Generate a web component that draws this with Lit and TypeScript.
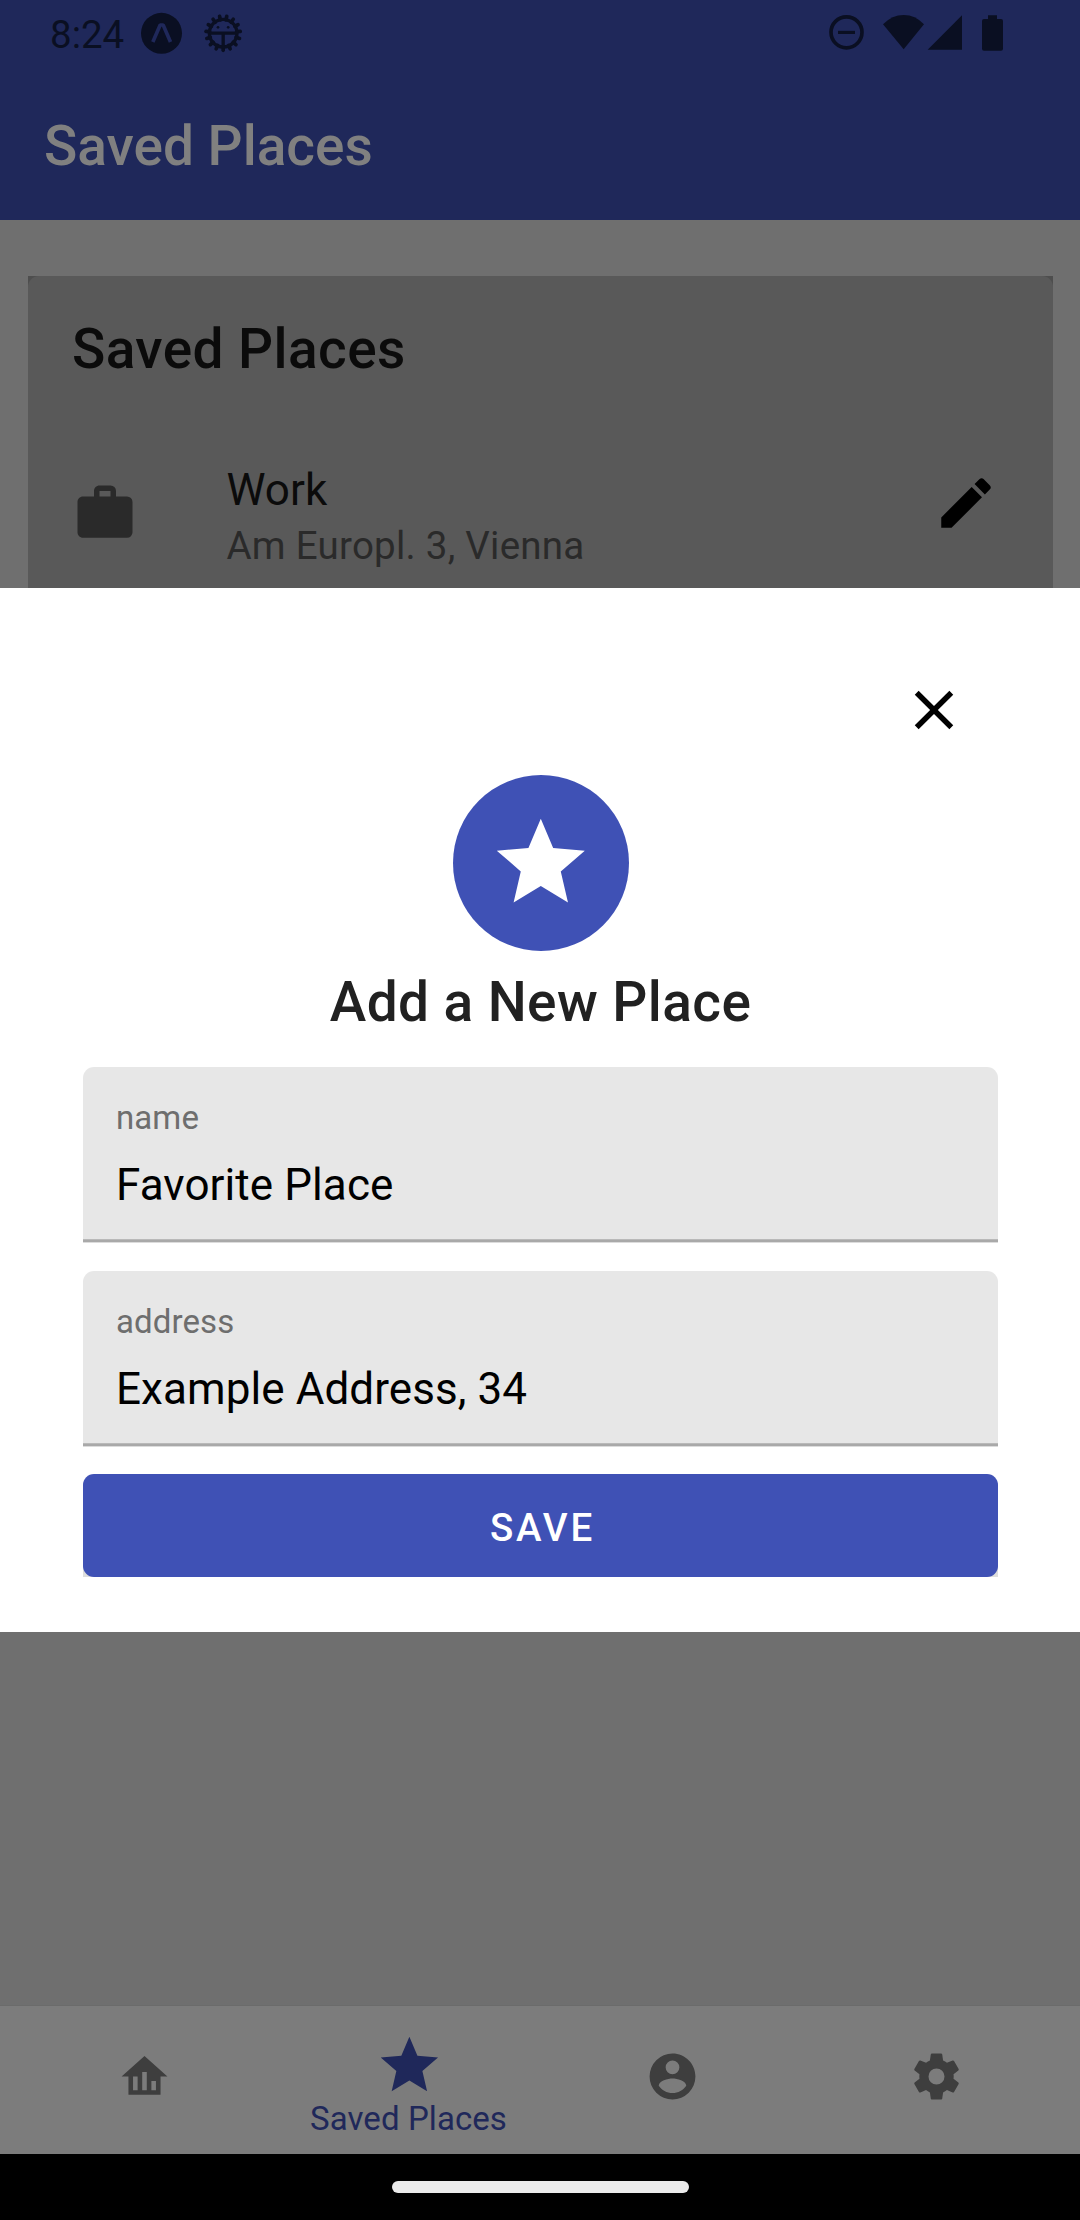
import { LitElement, html, css, svg } from "lit";
import { customElement } from "lit/decorators.js";

const ICONS = {
  briefcase:
    "M10,2H14A2,2 0 0,1 16,4V6H20A2,2 0 0,1 22,8V19A2,2 0 0,1 20,21H4C2.89,21 2,20.1 2,19V8C2,6.89 2.89,6 4,6H8V4C8,2.89 8.89,2 10,2M14,6V4H10V6H14Z",
  pencil:
    "M20.71,7.04C21.1,6.65 21.1,6 20.71,5.63L18.37,3.29C18,2.9 17.35,2.9 16.96,3.29L15.12,5.12L18.87,8.87M3,17.25V21H6.75L17.81,9.93L14.06,6.18L3,17.25Z",
  close:
    "M19,6.41L17.59,5L12,10.59L6.41,5L5,6.41L10.59,12L5,17.59L6.41,19L12,13.41L17.59,19L19,17.59L13.41,12L19,6.41Z",
  star: "M12,17.27L18.18,21L16.54,13.97L22,9.24L14.81,8.62L12,2L9.19,8.62L2,9.24L7.45,13.97L5.82,21L12,17.27Z",
  home: "M12,3L2,12H5V20H19V12H22L12,3M9,18H7V12H9V18M13,18H11V10H13V18M17,18H15V14H17V18Z",
  account:
    "M12,19.2C9.5,19.2 7.29,17.92 6,16C6.03,14 10,12.9 12,12.9C14,12.9 17.97,14 18,16C16.71,17.92 14.5,19.2 12,19.2M12,5A3,3 0 0,1 15,8A3,3 0 0,1 12,11A3,3 0 0,1 9,8A3,3 0 0,1 12,5M12,2A10,10 0 0,0 2,12A10,10 0 0,0 12,22A10,10 0 0,0 22,12C22,6.47 17.5,2 12,2Z",
  cog: "M12,15.5A3.5,3.5 0 0,1 8.5,12A3.5,3.5 0 0,1 12,8.5A3.5,3.5 0 0,1 15.5,12A3.5,3.5 0 0,1 12,15.5M19.43,12.97C19.47,12.65 19.5,12.33 19.5,12C19.5,11.67 19.47,11.34 19.43,11L21.54,9.37C21.73,9.22 21.78,8.95 21.66,8.73L19.66,5.27C19.54,5.05 19.27,4.96 19.05,5.05L16.56,6.05C16.04,5.66 15.5,5.32 14.87,5.07L14.5,2.42C14.46,2.18 14.25,2 14,2H10C9.75,2 9.54,2.18 9.5,2.42L9.13,5.07C8.5,5.32 7.96,5.66 7.44,6.05L4.95,5.05C4.73,4.96 4.46,5.05 4.34,5.27L2.34,8.73C2.21,8.95 2.27,9.22 2.46,9.37L4.57,11C4.53,11.34 4.5,11.67 4.5,12C4.5,12.33 4.53,12.65 4.57,12.97L2.46,14.63C2.27,14.78 2.21,15.05 2.34,15.27L4.34,18.73C4.46,18.95 4.73,19.03 4.95,18.95L7.44,17.94C7.96,18.34 8.5,18.68 9.13,18.93L9.5,21.58C9.54,21.82 9.75,22 10,22H14C14.25,22 14.46,21.82 14.5,21.58L14.87,18.93C15.5,18.67 16.04,18.34 16.56,17.94L19.05,18.95C19.27,19.03 19.54,18.95 19.66,18.73L21.66,15.27C21.78,15.05 21.73,14.78 21.54,14.63L19.43,12.97Z",
};

const icon = (name: keyof typeof ICONS, cls: string) =>
  html`<svg class="icon ${cls}" viewBox="0 0 24 24"><path d=${ICONS[name]} /></svg>`;

@customElement("status-bar")
class StatusBar extends LitElement {
  static styles = css`
    :host {
      display: flex;
      align-items: flex-start;
      height: 66px;
      padding: 0 72px 0 50px;
      box-sizing: border-box;
      color: #0a0f22;
      fill: #0a0f22;
    }
    .time {
      font-size: 38.5px;
      line-height: 70px;
      width: 91px;
    }
    svg { display: block; flex: none; }
    .expo { margin: 12px 20px 0 0; }
    .caret { fill: none; stroke: #1f285a; stroke-width: 11; stroke-linejoin: bevel; }
    .bug { margin-top: 13px; }
    .line { fill: none; stroke: #0a0f22; }
    .fill { flex: 1; }
    .system { margin-top: 12px; }
  `;

  render() {
    const teeth = Array.from({ length: 15 }, (_, i) => i * 24);
    return html`
      <span class="time">8:24</span>
      <svg class="expo" width="42" height="43" viewBox="423 36 126 129">
        <circle cx="484.5" cy="100" r="61.5" />
        <path class="caret" d="M458.500 126L480.500 75H489.500L511.500 126" />
      </svg>
      <svg class="bug" width="40" height="40" viewBox="607 39 120 120">
        ${teeth.map(
          (a) => svg`<line class="line" x1="667.500" y1="140" x2="667.500" y2="151"
            stroke-width="11" stroke-linecap="round" transform="rotate(${a} 667.500 99.500)" />`,
        )}
        <circle class="line" cx="667.5" cy="99.5" r="41.500" stroke-width="10" />
        <path class="line" stroke-width="10" d="M626 99.500H709M667.500 99V141" />
        <circle cx="652" cy="82" r="4" />
        <circle cx="682.5" cy="82" r="4" />
      </svg>
      <span class="fill"></span>
      <svg class="system" width="180" height="42" viewBox="144 36 540 126">
        <circle class="line" cx="199.500" cy="97" r="46.500" stroke-width="11" />
        <path d="M174 92.500H225V102H174Z" />
        <path d="M371 148L309 73Q336 45 371 45Q406 45 432 73Z" />
        <path d="M443 149.500H546V46Z" />
        <path d="M624 46H651V57H663Q669 57 669 63V146Q669 152 663 152H612Q606 152 606 146V63Q606 57 612 57H624Z" />
      </svg>
    `;
  }
}

@customElement("text-field")
class TextField extends LitElement {
  static properties = { label: {}, value: {} };
  declare label: string;
  declare value: string;

  static styles = css`
    :host {
      display: flex;
      flex-direction: column;
      height: 176px;
      box-sizing: border-box;
      padding: 28.7px 33px 0;
      background: linear-gradient(
        #e7e7e7 172px,
        #b9b9b9 172px 173px,
        #a9a9a9 173px 175px,
        #dcdcdc 175px
      );
      border-radius: 11px 11px 0 0;
    }
    .label { font-size: 33px; line-height: 44px; color: #6e6e6e; letter-spacing: 0.1px; }
    .value {
      font-size: 44px;
      line-height: 52px;
      margin-top: 19.3px;
      letter-spacing: 0.08px;
      color: #000;
    }
  `;

  render() {
    return html`<span class="label">${this.label}</span><span class="value">${this.value}</span>`;
  }
}

@customElement("app-root")
class AppRoot extends LitElement {
  static styles = css`
    :host {
      display: flex;
      flex-direction: column;
      width: 1080px;
      height: 2220px;
      overflow: hidden;
      background: #6f6f6f;
      font-family: Roboto, sans-serif;
    }
    .icon { display: block; flex: none; width: 66px; height: 66px; fill: currentColor; }
    .header { height: 220px; flex: none; background: #1f285a; }
    .bar-title {
      height: 154px;
      box-sizing: border-box;
      padding: 6px 44px 0;
      line-height: 148px;
      font-size: 55px;
      font-weight: 500;
      color: #808080;
    }
    .content { height: 368px; flex: none; box-sizing: border-box; padding: 56px 27px 0 28px; overflow: hidden; }
    .card-back { background: #4e4e4e; }
    .card { height: 400px; border-radius: 11px; background: #595959; box-sizing: border-box; padding-top: 32px; }
    .card-title {
      padding-left: 44px;
      font-size: 55px;
      font-weight: 500;
      line-height: 82.5px;
      letter-spacing: 0.41px;
      color: #0b0b0b;
    }
    .row { display: flex; align-items: flex-start; padding: 73.5px 54px 0 44px; }
    .briefcase { margin: 16px 88.5px 0 0; color: #2a2a2a; }
    .place { flex: 1; display: flex; flex-direction: column; }
    .place-name { font-size: 44px; line-height: 52px; color: #0b0b0b; }
    .place-address { font-size: 38.5px; line-height: 59px; letter-spacing: 0.25px; color: #2a2a2a; }
    .pencil { margin-top: 6px; color: #000; }
    .sheet {
      height: 1044px;
      flex: none;
      box-sizing: border-box;
      background: #fff;
      padding: 89px 82px 0 83px;
      display: flex;
      flex-direction: column;
    }
    .close { align-self: flex-end; margin-right: 31.5px; }
    .badge {
      align-self: center;
      width: 176px;
      height: 176px;
      margin-top: 32px;
      border-radius: 50%;
      background: #3f51b5;
      color: #fff;
      display: flex;
      align-items: center;
      justify-content: center;
    }
    .badge-star { width: 105.6px; height: 105.6px; }
    .sheet-title {
      margin: 10px 0 23.5px;
      text-align: center;
      font-size: 55px;
      font-weight: 500;
      line-height: 82.5px;
      letter-spacing: 0.41px;
      color: #212121;
    }
    .fields { display: flex; flex-direction: column; gap: 28px; margin-bottom: 27px; }
    .save-back { background: linear-gradient(#fff 60%, #dedede 60%); }
    .save {
      height: 103px;
      padding-left: 4px;
      border-radius: 11px;
      background: #3f51b5;
      color: #fff;
      text-align: center;
      font-size: 38.5px;
      font-weight: 500;
      line-height: 107px;
      letter-spacing: 2.75px;
    }
    .spacer { flex: 1; border-bottom: 1px solid #6b6b6b; }
    .nav {
      height: 148px;
      flex: none;
      background: #7c7c7c;
      color: #3e3e3e;
      display: flex;
      justify-content: center;
    }
    .tab { width: 264px; display: flex; flex-direction: column; align-items: center; }
    .tab-icon { width: 55px; height: 55px; margin: 43px 0 0 1px; }
    .active { color: #1f285a; }
    .active-icon { width: 68.75px; height: 68.75px; margin: 25px 0 0 3px; }
    .tab-label { font-size: 33px; line-height: 44px; margin: -3px 0 0 1px; letter-spacing: 0.08px; }
    .gesture { height: 66px; flex: none; background: #000; display: flex; justify-content: center; }
    .pill { width: 297px; height: 12px; margin-top: 27px; border-radius: 6px; background: #ebebeb; }
  `;

  render() {
    return html`
      <header class="header">
        <status-bar></status-bar>
        <div class="bar-title">Saved Places</div>
      </header>
      <main class="content">
        <div class="card-back">
          <div class="card">
            <div class="card-title">Saved Places</div>
            <div class="row">
              ${icon("briefcase", "briefcase")}
              <div class="place">
                <span class="place-name">Work</span>
                <span class="place-address">Am Europl. 3, Vienna</span>
              </div>
              ${icon("pencil", "pencil")}
            </div>
          </div>
        </div>
      </main>
      <section class="sheet">
        ${icon("close", "close")}
        <div class="badge">${icon("star", "badge-star")}</div>
        <div class="sheet-title">Add a New Place</div>
        <div class="fields">
          <text-field .label=${"name"} .value=${"Favorite Place"}></text-field>
          <text-field .label=${"address"} .value=${"Example Address, 34"}></text-field>
        </div>
        <div class="save-back"><div class="save">SAVE</div></div>
      </section>
      <div class="spacer"></div>
      <nav class="nav">
        <div class="tab">${icon("home", "tab-icon")}</div>
        <div class="tab active">
          ${icon("star", "active-icon")}
          <span class="tab-label">Saved Places</span>
        </div>
        <div class="tab">${icon("account", "tab-icon")}</div>
        <div class="tab">${icon("cog", "tab-icon")}</div>
      </nav>
      <div class="gesture"><div class="pill"></div></div>
    `;
  }
}
